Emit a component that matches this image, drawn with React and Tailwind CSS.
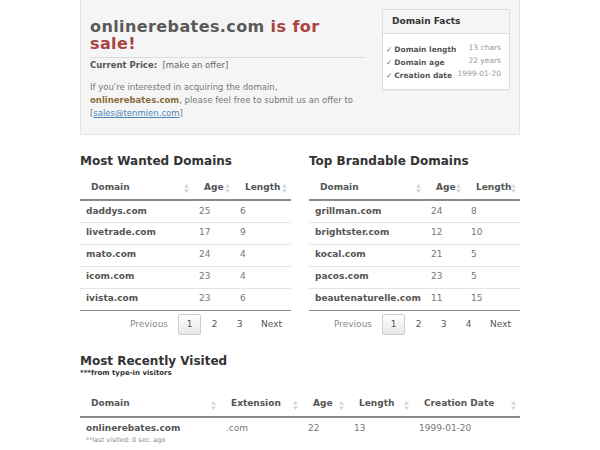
import React from 'react';

const SortIcon = () => (
  <svg width="5" height="9" viewBox="0 0 5 9" className="inline-block">
    <path d="M2.5 0 L5 3.5 L0 3.5 Z" fill="#d4d4d4" />
    <path d="M2.5 9 L5 5.5 L0 5.5 Z" fill="#d4d4d4" />
  </svg>
);

const DataTable = ({ cols, rows }) => (
  <table className="w-full table-fixed border-collapse">
    <thead>
      <tr className="border-b-2 border-[#8a8a8a]">
        {cols.map((c) => (
          <th key={c.label} style={{ width: c.w }} className="h-[24px] text-left font-bold text-[9px] text-[#555] pl-[11px] pr-[4px] relative">
            <span>{c.label}</span>
            <span className="absolute right-[4px] top-[8px] leading-none"><SortIcon /></span>
          </th>
        ))}
      </tr>
    </thead>
    <tbody>
      {rows.map((r, i) => (
        <tr key={i} className={i === rows.length - 1 ? 'border-b border-[#8a8a8a]' : 'border-b border-[#e4e4e4]'}>
          {r.map((cell, j) => (
            <td key={j} className={`h-[22px] pl-[6px] text-[9px] ${j === 0 ? 'font-bold text-[#555]' : 'text-[#777]'}`}>
              {cell}
            </td>
          ))}
        </tr>
      ))}
    </tbody>
  </table>
);

const Pager = ({ pages }) => (
  <div className="flex items-center justify-end h-[28px] text-[9px] text-[#555] pr-[9px]">
    <span className="text-[#888] mr-[10px]">Previous</span>
    {pages.map((p) => (
      <span
        key={p}
        className={p === 1
          ? 'w-[23px] h-[21px] flex items-center justify-center border border-[#ccc] rounded-[2px] bg-gradient-to-b from-white to-[#e8e8e8] mr-[2px]'
          : 'w-[23px] h-[21px] flex items-center justify-center mr-[2px]'}
      >
        {p}
      </span>
    ))}
    <span className="ml-[8px]">Next</span>
  </div>
);

const Fact = ({ label, value }) => (
  <div className="flex items-center justify-between h-[13px] whitespace-nowrap">
    <span className="font-bold text-[7.5px] text-[#555]"><span className="text-[#3c8a3c] mr-[2px]">✓</span>{label}</span>
    <span className="text-[7.5px] text-[#999] -mt-[3px]">{value}</span>
  </div>
);

export default function App() {
  return (
    <div className="w-full min-h-[450px] bg-white font-['DejaVu_Sans',sans-serif]">
      <div className="w-[440px] mx-auto">
        <div className="bg-[#f5f5f5] border border-t-0 border-[#e3e3e3] h-[135px] flex pl-[9px] pr-[9px]">
          <div className="w-[276px] pt-[18px]">
            <h1 className="text-[16px] font-bold leading-[17px] tracking-[0.4px] text-[#5a5a5a] pb-[5px] border-b border-[#dcdcdc]">
              onlinerebates.com <span className="text-[#a94442]">is for sale!</span>
            </h1>
            <p className="text-[8.5px] text-[#666] mt-[1px] leading-[13px]">
              <span className="font-bold text-[#555]">Current Price:</span>&nbsp; [make an offer]
            </p>
            <p className="text-[8.5px] text-[#777] mt-[9px] leading-[13px]">
              If you're interested in acquiring the domain, <span className="font-bold text-[#8a6d3b]">onlinerebates.com</span>, please feel free to submit us an offer to [<span className="underline text-[#4a86b8]">sales@tenmien.com</span>]
            </p>
          </div>
          <div className="ml-auto mt-[9px] w-[128px] h-[81px] bg-white border border-[#ddd] rounded-[2px] shadow-[0_1px_1px_rgba(0,0,0,0.05)]">
            <div className="h-[24px] bg-[#f5f5f5] border-b border-[#ddd] flex items-center pl-[9px] text-[9px] font-bold text-[#333]">
              Domain Facts
            </div>
            <div className="pt-[9px] pl-[3px] pr-[8px]">
              <Fact label="Domain length" value="13 chars" />
              <Fact label="Domain age" value="22 years" />
              <Fact label="Creation date" value="1999-01-20" />
            </div>
          </div>
        </div>

        <div className="flex justify-between mt-[18px]">
          <div className="w-[211px]">
            <h2 className="text-[12px] font-bold text-[#333] leading-[16px] mb-[7px]">Most Wanted Domains</h2>
            <DataTable
              cols={[{ label: 'Domain', w: 113 }, { label: 'Age', w: 41 }, { label: 'Length', w: 57 }]}
              rows={[
                ['daddys.com', '25', '6'],
                ['livetrade.com', '17', '9'],
                ['mato.com', '24', '4'],
                ['icom.com', '23', '4'],
                ['ivista.com', '23', '6'],
              ]}
            />
            <Pager pages={[1, 2, 3]} />
          </div>
          <div className="w-[211px]">
            <h2 className="text-[12px] font-bold text-[#333] leading-[16px] mb-[7px]">Top Brandable Domains</h2>
            <DataTable
              cols={[{ label: 'Domain', w: 116 }, { label: 'Age', w: 40 }, { label: 'Length', w: 55 }]}
              rows={[
                ['grillman.com', '24', '8'],
                ['brightster.com', '12', '10'],
                ['kocal.com', '21', '5'],
                ['pacos.com', '23', '5'],
                ['beautenaturelle.com', '11', '15'],
              ]}
            />
            <Pager pages={[1, 2, 3, 4]} />
          </div>
        </div>

        <div className="mt-[15px]">
          <h2 className="text-[12px] font-bold text-[#333] leading-[15px]">Most Recently Visited</h2>
          <p className="text-[7px] font-bold text-[#333] leading-[9px]">***from type-in visitors</p>
          <div className="mt-[15px]">
            <table className="w-full table-fixed border-collapse">
              <thead>
                <tr className="border-b-2 border-[#8a8a8a]">
                  {[['Domain', 140], ['Extension', 82], ['Age', 46], ['Length', 65], ['Creation Date', 107]].map(([l, w]) => (
                    <th key={l} style={{ width: w }} className="h-[24px] text-left font-bold text-[9px] text-[#555] pl-[11px] relative">
                      {l}
                      <span className="absolute right-[4px] top-[8px] leading-none"><SortIcon /></span>
                    </th>
                  ))}
                </tr>
              </thead>
              <tbody>
                <tr>
                  <td className="pl-[6px] pt-[4px] align-top">
                    <div className="text-[9px] font-bold text-[#555] leading-[12px]">onlinerebates.com</div>
                    <div className="text-[6.5px] text-[#888] leading-[12px]">**last visited: 0 sec. ago</div>
                  </td>
                  <td className="pl-[6px] pt-[4px] align-top text-[9px] text-[#777] leading-[12px]">.com</td>
                  <td className="pl-[6px] pt-[4px] align-top text-[9px] text-[#777] leading-[12px]">22</td>
                  <td className="pl-[6px] pt-[4px] align-top text-[9px] text-[#777] leading-[12px]">13</td>
                  <td className="pl-[6px] pt-[4px] align-top text-[9px] text-[#777] leading-[12px]">1999-01-20</td>
                </tr>
              </tbody>
            </table>
          </div>
        </div>
      </div>
    </div>
  );
}
